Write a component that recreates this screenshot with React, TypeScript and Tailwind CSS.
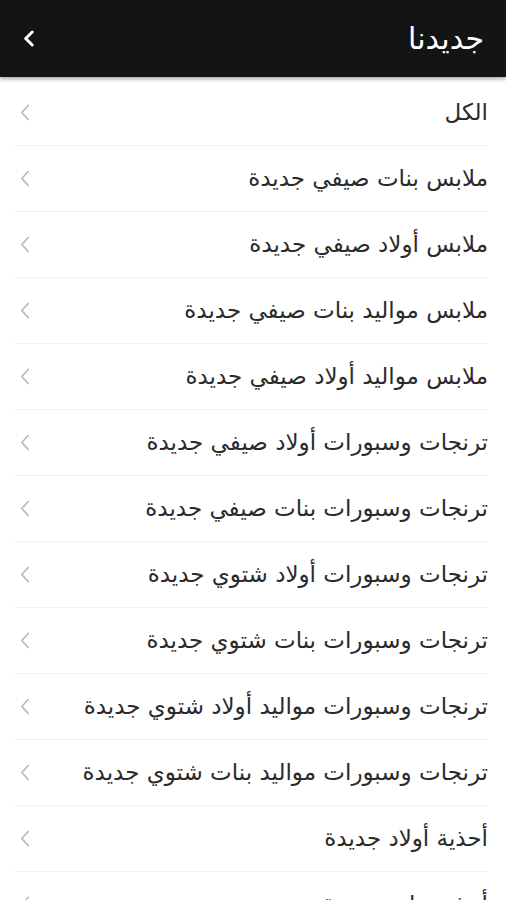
const items = [
  'الكل',
  'ملابس بنات صيفي جديدة',
  'ملابس أولاد صيفي جديدة',
  'ملابس مواليد بنات صيفي جديدة',
  'ملابس مواليد أولاد صيفي جديدة',
  'ترنجات وسبورات أولاد صيفي جديدة',
  'ترنجات وسبورات بنات صيفي جديدة',
  'ترنجات وسبورات أولاد شتوي جديدة',
  'ترنجات وسبورات بنات شتوي جديدة',
  'ترنجات وسبورات مواليد أولاد شتوي جديدة',
  'ترنجات وسبورات مواليد بنات شتوي جديدة',
  'أحذية أولاد جديدة',
  'أحذية بنات جديدة',
]

function Chevron({ className }: { className?: string }) {
  return (
    <svg viewBox="0 0 10 18" className={className} fill="none" stroke="currentColor" strokeLinecap="round" strokeLinejoin="round">
      <path d="M8.5 1.5 1.5 9l7 7.5" />
    </svg>
  )
}

export default function App() {
  return (
    <div dir="rtl" className="h-[900px] overflow-hidden bg-white font-['DejaVu_Sans',sans-serif]">
      {/* Header */}
      <div className="relative z-10 flex h-[77px] items-center justify-between bg-[#141414] pl-[22px] pr-[22px] shadow-[0_2px_4px_rgba(0,0,0,0.35)]">
        <h1 className="text-[30px] leading-none text-white">جديدنا</h1>
        <svg viewBox="0 0 14 18" className="h-[17px] w-[13px] text-white" fill="none" stroke="currentColor" strokeWidth="3.2" strokeLinecap="round" strokeLinejoin="round">
          <path d="M11 2 4 9l7 7" />
        </svg>
      </div>

      {/* List */}
      <div className="pt-[3px]">
        {items.map((item) => (
          <div key={item} className="mr-[18px] ml-[15px] flex h-[66px] items-center justify-between border-b border-[#f2f2f2]">
            <span className="text-[23px] leading-none text-[#2b2b2b]">{item}</span>
            <Chevron className="ml-[5px] h-[17px] w-[10px] text-[#b5b5b5] [stroke-width:1.6]" />
          </div>
        ))}
      </div>
    </div>
  )
}
